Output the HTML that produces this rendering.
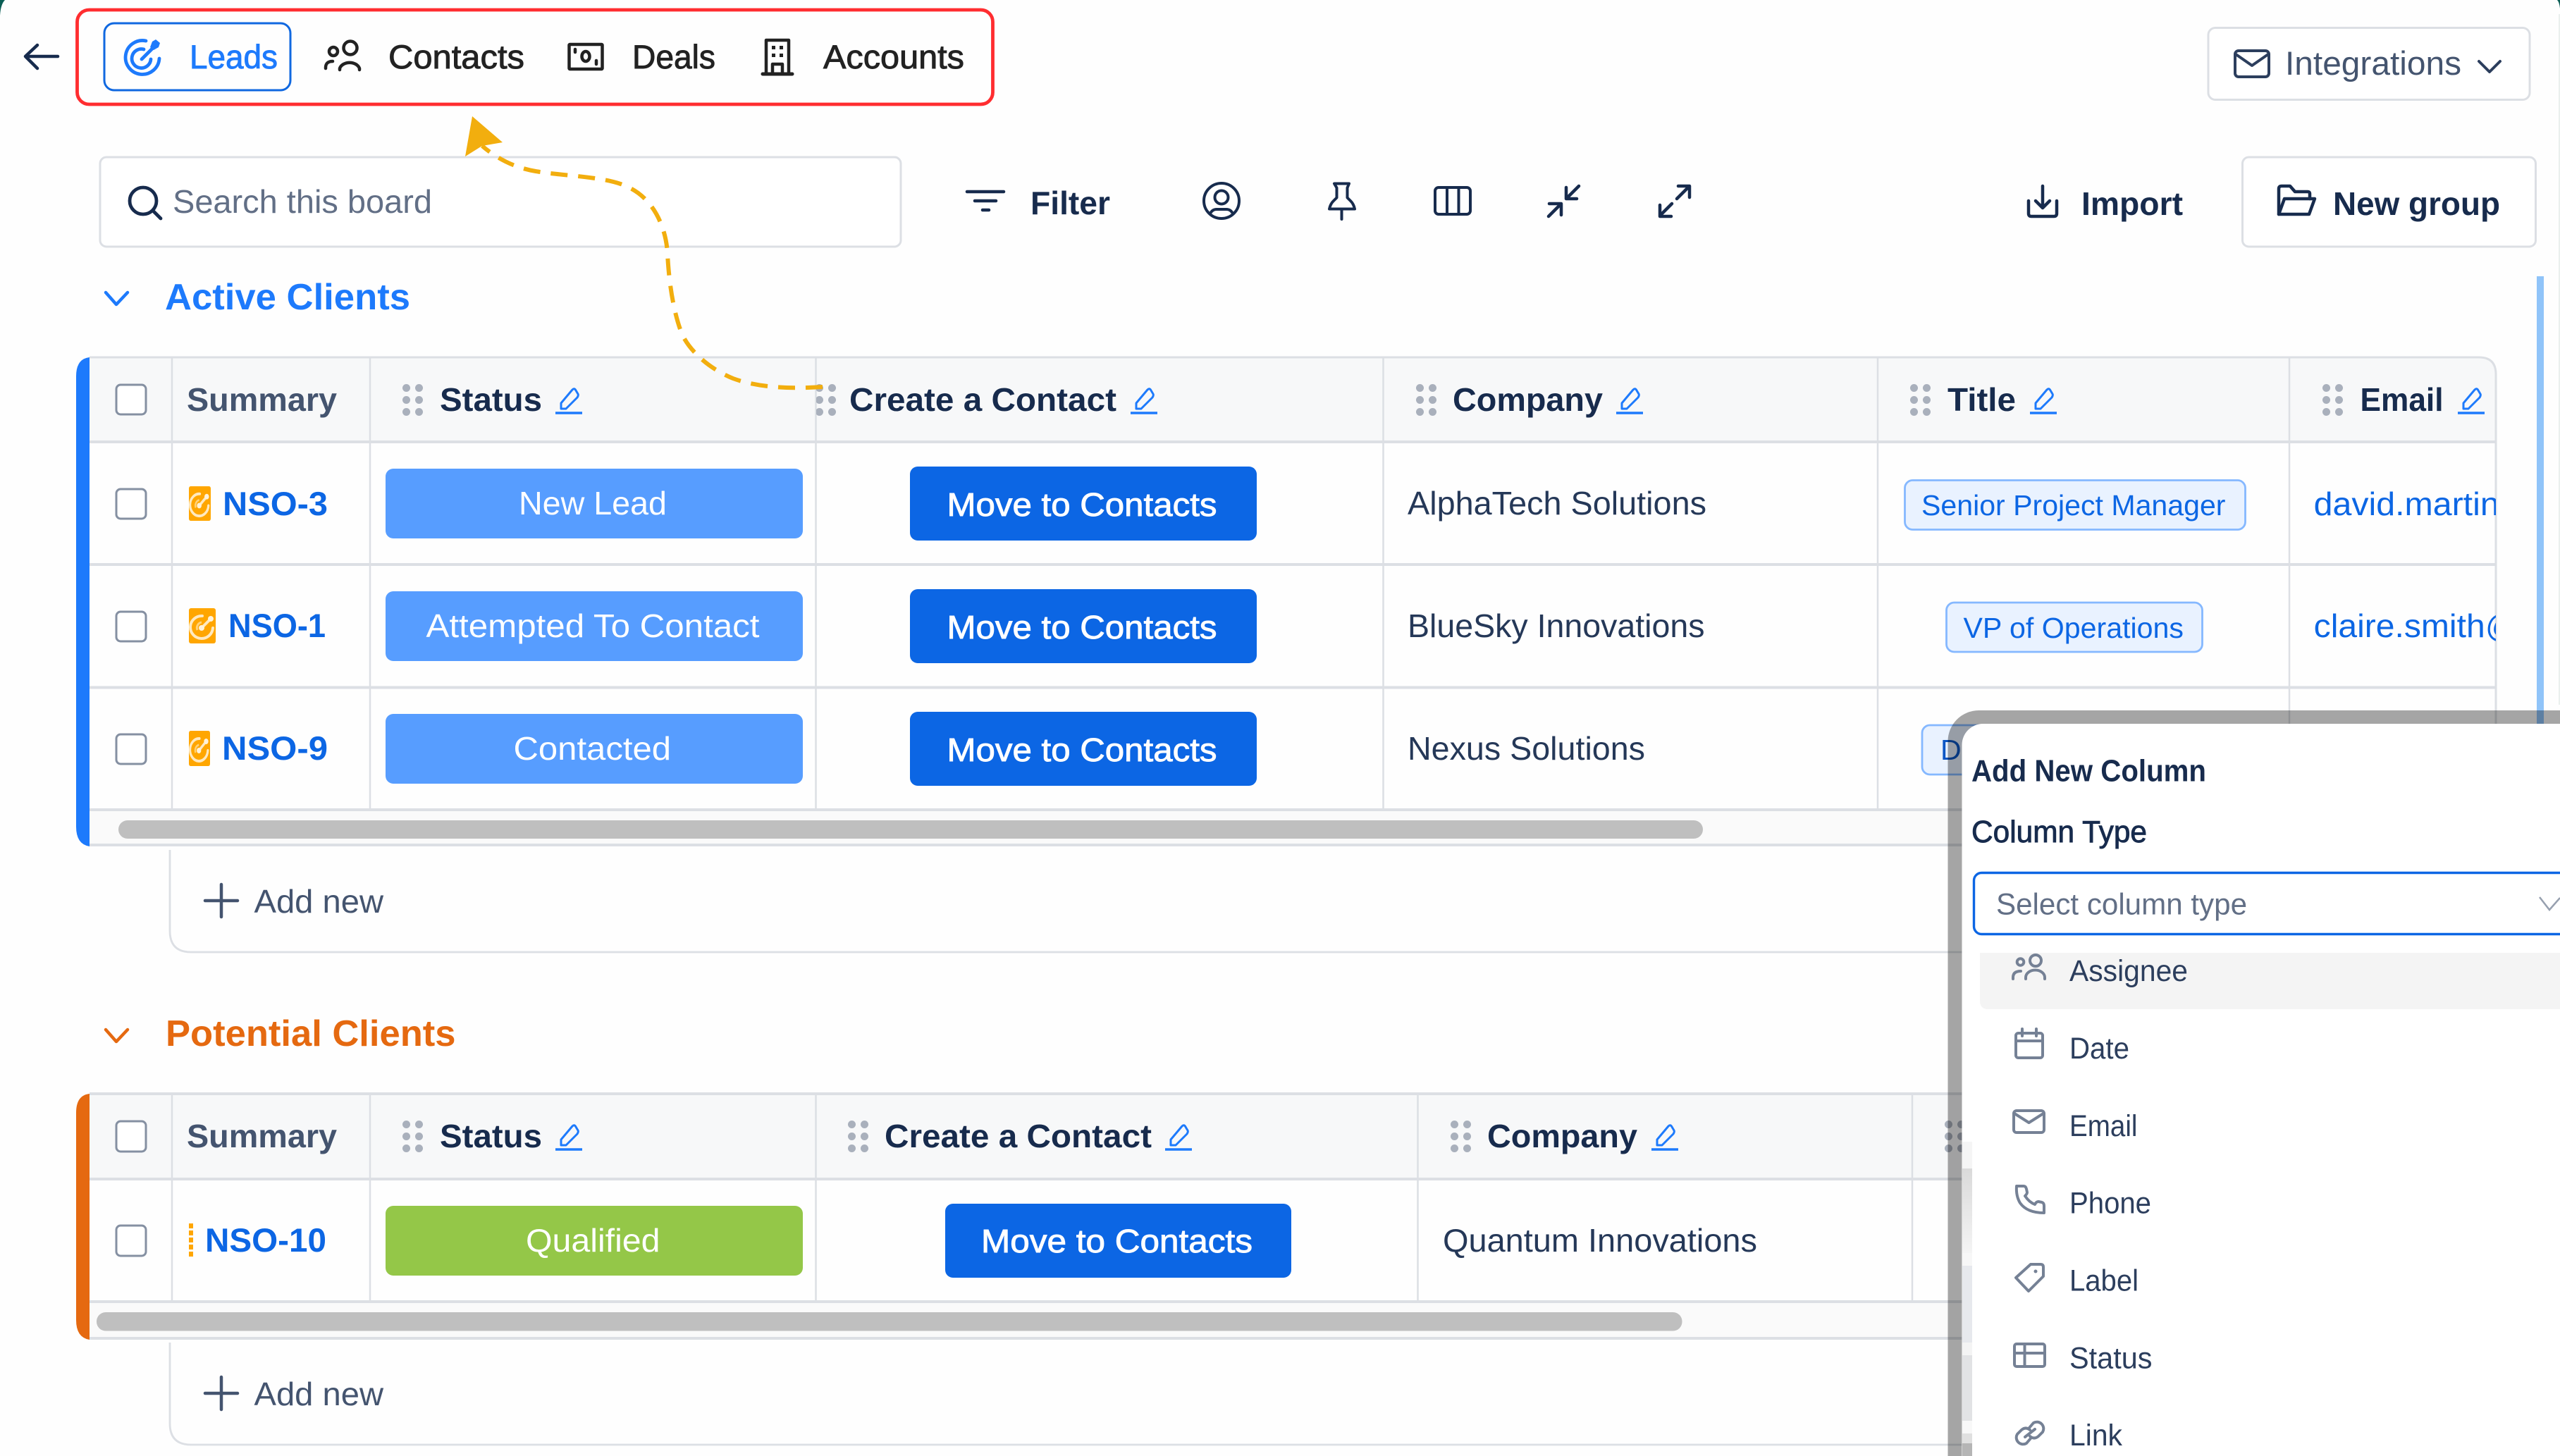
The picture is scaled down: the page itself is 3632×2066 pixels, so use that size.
<!DOCTYPE html>
<html lang="en"><head><meta charset="utf-8"><title>Leads board</title>
<style>
html,body{margin:0;padding:0;background:#fff;width:3632px;height:2066px;overflow:hidden}
svg{display:block}
text{font-family:"Liberation Sans",sans-serif;font-size:46px;fill:#172b4d;white-space:pre;transform:translateX(-2px)}
.m{stroke-width:.9px;paint-order:stroke}
.b{font-weight:bold}
.nav{font-size:47px;fill:#222;stroke:#222}
.hd{font-weight:bold;font-size:46px;fill:#172b4d}
.sm{font-weight:bold;font-size:46px;fill:#44546f}
.st{fill:#fff;font-size:46px}
.btn{fill:#fff;stroke:#fff;font-size:46px}
.cell{fill:#253858;font-size:46px}
.id{fill:#0c66e4;font-weight:bold;font-size:47px}
.tag{fill:#0c66e4;font-size:41px}
.mail{fill:#0c66e4;font-size:46px}
.it{fill:#2c3e5d;font-size:43px}
.ic{fill:none;stroke:#172b4d;stroke-width:4.5;stroke-linecap:round;stroke-linejoin:round}
.dk{fill:none;stroke:#222;stroke-width:4.5;stroke-linecap:round;stroke-linejoin:round}
.gr{fill:none;stroke:#758195;stroke-width:4;stroke-linecap:round;stroke-linejoin:round}
.ln{stroke:#dcdfe4;stroke-width:2.5}
.hl{stroke:#dcdfe4;stroke-width:4}
.cb{fill:#fff;stroke:#8590a2;stroke-width:3}
</style></head><body>
<svg xmlns="http://www.w3.org/2000/svg" width="3632" height="2066" viewBox="0 0 3632 2066">
<defs>
<symbol id="grip" viewBox="0 0 29 45"><g fill="#a9b0bc"><circle cx="5.500" cy="5.500" r="5.500"/><circle cx="23.500" cy="5.500" r="5.500"/><circle cx="5.500" cy="22.500" r="5.500"/><circle cx="23.500" cy="22.500" r="5.500"/><circle cx="5.500" cy="39.500" r="5.500"/><circle cx="23.500" cy="39.500" r="5.500"/></g></symbol>
<symbol id="pen" viewBox="0 0 38 38"><path d="M8 30V22L24 3Q27 0 29 4L32 9Q33 11 31 14L15 30Z" fill="none" stroke="#1d7afc" stroke-width="3" stroke-linejoin="round"/><path d="M0 36H38" stroke="#1d7afc" stroke-width="3.600"/></symbol>
<symbol id="lead" viewBox="0 0 38 50" preserveAspectRatio="none"><rect width="38" height="50" rx="3" fill="#ffa600"/><g fill="none" stroke="#ffe9bf" stroke-width="4" stroke-linecap="round"><path d="M19 11A16 16 0 1 0 34 28"/><path d="M18 28L30 16"/></g><path d="M18 20A8 8 0 0 0 12 31" fill="none" stroke="#ffd27a" stroke-width="3"/><circle cx="18" cy="28" r="4" fill="#fff2d8"/><circle cx="31" cy="15" r="4" fill="#fff2d8"/></symbol>
</defs>
<rect width="3632" height="2066" fill="#fefefe"/>
<path d="M0 0H7Q1 6 0 22Z" fill="#0b5e55"/>
<path d="M3632 0H3628Q3631 3 3632 12Z" fill="#0b5e55"/>

<!-- top nav -->
<path d="M82 80H38" class="ic" stroke-width="5"/><path d="M53 64L36 80L53 97" class="ic"/>
<rect x="109.500" y="14" width="1299" height="134" rx="17" fill="none" stroke="#ff2d30" stroke-width="4.800"/>
<rect x="148" y="33" width="264" height="95" rx="14" fill="none" stroke="#1068e0" stroke-width="3"/>
<g fill="none" stroke="#1d7afc" stroke-width="4.800" stroke-linecap="round" stroke-linejoin="round">
<path d="M207 58A24 24 0 1 0 226 83"/><path d="M204 70A13.500 13.500 0 1 0 214 84"/><path d="M201 84L217 68"/></g>
<path d="M213 67L216 59L221 56L227 61L225 67L218 71Z" fill="#1d7afc"/>
<text x="271" y="97" textLength="125" lengthAdjust="spacingAndGlyphs" class="m" style="font-size:47px;fill:#1d7afc;stroke:#1d7afc">Leads</text>
<g class="dk"><circle cx="497" cy="68" r="9.500"/><path d="M482 99V97A14.500 11 0 0 1 510 97V99"/><circle cx="473" cy="73" r="6"/><path d="M462 97V96Q462 87 472 87"/></g>
<text x="553" y="97" textLength="193" lengthAdjust="spacingAndGlyphs" class="nav m">Contacts</text>
<g class="dk"><rect x="807.500" y="63" width="47" height="35" rx="1"/><ellipse cx="831" cy="80" rx="5.500" ry="7"/><path d="M816 70V74M846 86V91"/></g>
<text x="899" y="97" textLength="118" lengthAdjust="spacingAndGlyphs" class="nav m">Deals</text>
<g class="dk"><path d="M1087 104V57H1119V104"/><path d="M1082 105H1124" stroke-width="5"/><path d="M1096 104V91H1110V104"/></g>
<g fill="#222"><rect x="1095" y="65" width="5" height="5"/><rect x="1106" y="65" width="5" height="5"/><rect x="1095" y="76" width="5" height="5"/><rect x="1106" y="76" width="5" height="5"/></g>
<text x="1170" y="97" textLength="200" lengthAdjust="spacingAndGlyphs" class="nav m">Accounts</text>

<!-- integrations -->
<rect x="3133" y="39.500" width="456" height="102" rx="10" fill="#fff" stroke="#dcdfe4" stroke-width="3"/>
<g class="ic" style="stroke:#2c3e5d;stroke-width:4"><rect x="3171" y="72" width="48" height="37" rx="5"/><path d="M3172 77L3195 93L3218 77"/><path d="M3517 87L3532 102L3547 87"/></g>
<text x="3244" y="106" textLength="250" lengthAdjust="spacingAndGlyphs" style="font-size:47px;fill:#44546f">Integrations</text>

<!-- toolbar -->
<rect x="142" y="223" width="1136" height="127" rx="9" fill="#fff" stroke="#dcdfe4" stroke-width="3"/>
<g class="ic" style="stroke-width:4.800"><circle cx="203" cy="285" r="19"/><path d="M217 299L228 310"/></g>
<text x="247" y="302" textLength="368" lengthAdjust="spacingAndGlyphs" style="font-size:46px;fill:#626f86">Search this board</text>
<g class="ic"><path d="M1372 272H1424M1383 285H1413M1394 298H1403"/></g>
<text x="1464" y="304" textLength="113" lengthAdjust="spacingAndGlyphs" class="b" style="font-size:46px;fill:#172b4d">Filter</text>
<g class="ic" style="stroke-width:4"><circle cx="1733" cy="285" r="25"/><circle cx="1733" cy="280" r="9.500"/><path d="M1717 303Q1720 297 1726 297H1740Q1746 297 1749 303"/></g>
<g class="ic" style="stroke-width:4"><path d="M1893 260.500H1914L1911.500 266.500V280.500L1916.500 285.500Q1920.500 289.500 1922 296.500H1886Q1887.500 289.500 1891.500 285.500L1896.500 280.500V266.500Z"/><path d="M1903.500 297V311"/><rect x="2036" y="266" width="50" height="38" rx="5"/><path d="M2053 266V304M2069.500 266V304"/></g>
<g class="ic" style="stroke-width:4.500"><path d="M2222 266V282H2237M2240 264L2222 282"/><path d="M2198 289H2215V305M2197 307L2215 289"/><path d="M2381 264H2397V280M2379 282L2396 265"/><path d="M2355 291V307H2371M2372 289L2355 306"/></g>
<g class="ic"><path d="M2898 264V295M2888 285L2898 295L2908 285"/><path d="M2878 285V303Q2878 307 2882 307H2914Q2918 307 2918 303V285"/></g>
<text x="2955" y="305" textLength="144" lengthAdjust="spacingAndGlyphs" class="b" style="fill:#172b4d">Import</text>
<rect x="3181.500" y="223" width="416" height="127" rx="9" fill="#fff" stroke="#dcdfe4" stroke-width="3"/>
<g class="ic"><path d="M3233 304V268Q3233 264 3237 264H3249L3256 272H3274Q3277 272 3277 275V282"/><path d="M3233 304L3241 282H3284L3276 304Z"/></g>
<text x="3312" y="305" textLength="237" lengthAdjust="spacingAndGlyphs" class="b" style="fill:#172b4d">New group</text>

<!-- scroll -->
<rect x="3599" y="392" width="10" height="660" fill="#90c4f9"/>
<line x1="3631" y1="20" x2="3631" y2="1000" stroke="#e3ebe9" stroke-width="1.500"/>

<!-- ACTIVE CLIENTS -->
<path d="M150 415L165 432L181 415" fill="none" stroke="#1d7afc" stroke-width="4.500" stroke-linecap="round" stroke-linejoin="round"/>
<text x="236" y="439" textLength="348" lengthAdjust="spacingAndGlyphs" class="b" style="font-size:52px;fill:#1d7afc">Active Clients</text>

<path d="M127 507H3517Q3541 507 3541 531V627H127Z" fill="#f7f8f9"/>
<rect x="127" y="1150" width="3414" height="48" fill="#fafafa"/>
<path d="M127 507Q108 509 108 534V1173Q108 1198 127 1201Z" fill="#1d7afc"/>
<path d="M127 507H3517Q3541 507 3541 531V1149" fill="none" stroke="#dcdfe4" stroke-width="3"/>
<g class="hl"><line x1="127" y1="627" x2="3541" y2="627"/><line x1="127" y1="801" x2="3541" y2="801"/><line x1="127" y1="975.500" x2="3541" y2="975.500"/><line x1="127" y1="1149" x2="3541" y2="1149"/><line x1="127" y1="1199" x2="2800" y2="1199"/></g>
<g class="ln"><line x1="244" y1="507" x2="244" y2="1149"/><line x1="525" y1="507" x2="525" y2="1149"/><line x1="1157.500" y1="507" x2="1157.500" y2="1149"/><line x1="1962.500" y1="507" x2="1962.500" y2="1149"/><line x1="2664" y1="507" x2="2664" y2="1149"/><line x1="3248" y1="507" x2="3248" y2="1149"/></g>
<rect x="168" y="1164" width="2248" height="26" rx="13" fill="#bfbfbf"/>

<rect x="165" y="546" width="42" height="42" rx="6" class="cb"/>
<rect x="165" y="694" width="42" height="42" rx="6" class="cb"/>
<rect x="165" y="868" width="42" height="42" rx="6" class="cb"/>
<rect x="165" y="1042" width="42" height="42" rx="6" class="cb"/>
<text x="267" y="583" textLength="213" lengthAdjust="spacingAndGlyphs" class="sm">Summary</text>
<use href="#grip" x="571" y="545" width="29" height="45"/>
<text x="626" y="583" textLength="145" lengthAdjust="spacingAndGlyphs" class="hd">Status</text>
<use href="#pen" x="788" y="550" width="38" height="38"/>
<svg x="1158" y="540" width="40" height="55"><use href="#grip" x="-1" y="5" width="29" height="45"/></svg>
<text x="1207" y="583" textLength="379" lengthAdjust="spacingAndGlyphs" class="hd">Create a Contact</text>
<use href="#pen" x="1604" y="550" width="38" height="38"/>
<use href="#grip" x="2009" y="545" width="29" height="45"/>
<text x="2063" y="583" textLength="213" lengthAdjust="spacingAndGlyphs" class="hd">Company</text>
<use href="#pen" x="2293" y="550" width="38" height="38"/>
<use href="#grip" x="2710" y="545" width="29" height="45"/>
<text x="2765" y="583" textLength="97" lengthAdjust="spacingAndGlyphs" class="hd">Title</text>
<use href="#pen" x="2880" y="550" width="38" height="38"/>
<use href="#grip" x="3295" y="545" width="29" height="45"/>
<text x="3350.500" y="583" textLength="118" lengthAdjust="spacingAndGlyphs" class="hd">Email</text>
<use href="#pen" x="3487" y="550" width="38" height="38"/>

<use href="#lead" x="268" y="690" width="31" height="49"/>
<text x="318" y="731" textLength="149" lengthAdjust="spacingAndGlyphs" class="id">NSO-3</text>
<use href="#lead" x="268" y="863" width="38" height="50"/>
<text x="326" y="904" textLength="138" lengthAdjust="spacingAndGlyphs" class="id">NSO-1</text>
<use href="#lead" x="268" y="1037" width="30" height="50"/>
<text x="317" y="1078" textLength="150" lengthAdjust="spacingAndGlyphs" class="id">NSO-9</text>

<rect x="547" y="665" width="592" height="99" rx="11" fill="#579dff"/>
<text x="738" y="730" textLength="210" lengthAdjust="spacingAndGlyphs" class="st">New Lead</text>
<rect x="547" y="839" width="592" height="99" rx="11" fill="#579dff"/>
<text x="606.500" y="904" textLength="473" lengthAdjust="spacingAndGlyphs" class="st">Attempted To Contact</text>
<rect x="547" y="1013" width="592" height="99" rx="11" fill="#579dff"/>
<text x="730.500" y="1078" textLength="223.500" lengthAdjust="spacingAndGlyphs" class="st">Contacted</text>

<rect x="1291" y="662" width="492" height="105" rx="11" fill="#0c66e4"/>
<text x="1345.500" y="732" textLength="383" lengthAdjust="spacingAndGlyphs" class="btn m">Move to Contacts</text>
<rect x="1291" y="836" width="492" height="105" rx="11" fill="#0c66e4"/>
<text x="1345.500" y="906" textLength="383" lengthAdjust="spacingAndGlyphs" class="btn m">Move to Contacts</text>
<rect x="1291" y="1010" width="492" height="105" rx="11" fill="#0c66e4"/>
<text x="1345.500" y="1080" textLength="383" lengthAdjust="spacingAndGlyphs" class="btn m">Move to Contacts</text>

<text x="1999" y="730" textLength="424" lengthAdjust="spacingAndGlyphs" class="cell">AlphaTech Solutions</text>
<text x="1999" y="904" textLength="421.500" lengthAdjust="spacingAndGlyphs" class="cell">BlueSky Innovations</text>
<text x="1999" y="1078" textLength="337" lengthAdjust="spacingAndGlyphs" class="cell">Nexus Solutions</text>

<rect x="2702.500" y="681.500" width="483" height="70" rx="11" fill="#e9f2ff" stroke="#85b8ff" stroke-width="2.800"/>
<text x="2728" y="731" textLength="431.500" lengthAdjust="spacingAndGlyphs" class="tag">Senior Project Manager</text>
<rect x="2761.500" y="855" width="363" height="70" rx="11" fill="#e9f2ff" stroke="#85b8ff" stroke-width="2.800"/>
<text x="2787.500" y="905" textLength="312.500" lengthAdjust="spacingAndGlyphs" class="tag">VP of Operations</text>
<rect x="2727" y="1029" width="200" height="70" rx="11" fill="#e9f2ff" stroke="#85b8ff" stroke-width="2.800"/>
<text x="2755" y="1078" class="tag" style="fill:#0c56c4">Director</text>
<svg x="3270" y="680" width="271" height="240">
<text x="14.700" y="51" textLength="263" lengthAdjust="spacingAndGlyphs" class="mail">david.martin</text>
<text x="14.700" y="224" textLength="243" lengthAdjust="spacingAndGlyphs" class="mail">claire.smith</text>
<text x="258" y="224" class="mail">@</text>
</svg>

<!-- Add new 1 -->
<path d="M241 1206V1321Q241 1351 271 1351H2800" fill="none" stroke="#dcdfe4" stroke-width="2.800"/>
<path d="M291 1278H337M314 1255V1301" stroke="#44546f" stroke-width="4.500" stroke-linecap="round"/>
<text x="362.500" y="1295" textLength="183.500" lengthAdjust="spacingAndGlyphs" style="font-size:46px;fill:#44546f">Add new</text>

<!-- POTENTIAL CLIENTS -->
<path d="M150 1461L165 1478L181 1461" fill="none" stroke="#e56910" stroke-width="4.500" stroke-linecap="round" stroke-linejoin="round"/>
<text x="237" y="1484" textLength="411.500" lengthAdjust="spacingAndGlyphs" class="b" style="font-size:52px;fill:#e56910">Potential Clients</text>

<rect x="127" y="1552" width="2700" height="121" fill="#f7f8f9"/>
<rect x="127" y="1848" width="2700" height="49" fill="#fafafa"/>
<path d="M127 1552Q108 1554 108 1579V1873Q108 1898 127 1901Z" fill="#e56910"/>
<g class="hl"><line x1="127" y1="1552" x2="2800" y2="1552"/><line x1="127" y1="1673" x2="2800" y2="1673"/><line x1="127" y1="1847" x2="2800" y2="1847"/><line x1="127" y1="1899" x2="2800" y2="1899"/></g>
<g class="ln"><line x1="244" y1="1552" x2="244" y2="1847"/><line x1="525" y1="1552" x2="525" y2="1847"/><line x1="1157.500" y1="1552" x2="1157.500" y2="1847"/><line x1="2011.500" y1="1552" x2="2011.500" y2="1847"/><line x1="2713" y1="1552" x2="2713" y2="1847"/></g>
<rect x="137" y="1862" width="2249.500" height="26.500" rx="13" fill="#bfbfbf"/>

<rect x="165" y="1591" width="42" height="43" rx="6" class="cb"/>
<rect x="165" y="1739" width="42" height="43" rx="6" class="cb"/>
<text x="267" y="1628" textLength="213" lengthAdjust="spacingAndGlyphs" class="sm">Summary</text>
<use href="#grip" x="571" y="1590" width="29" height="45"/>
<text x="626" y="1628" textLength="145" lengthAdjust="spacingAndGlyphs" class="hd">Status</text>
<use href="#pen" x="788" y="1595" width="38" height="38"/>
<use href="#grip" x="1203" y="1590" width="29" height="45"/>
<text x="1257" y="1628" textLength="379" lengthAdjust="spacingAndGlyphs" class="hd">Create a Contact</text>
<use href="#pen" x="1653" y="1595" width="38" height="38"/>
<use href="#grip" x="2058" y="1590" width="29" height="45"/>
<text x="2112" y="1628" textLength="213" lengthAdjust="spacingAndGlyphs" class="hd">Company</text>
<use href="#pen" x="2343" y="1595" width="38" height="38"/>
<use href="#grip" x="2759" y="1590" width="29" height="45"/>

<line x1="271" y1="1736" x2="271" y2="1785" stroke="#ffa600" stroke-width="6" stroke-dasharray="7 3"/>
<text x="293" y="1776" textLength="172" lengthAdjust="spacingAndGlyphs" class="id">NSO-10</text>
<rect x="547" y="1711" width="592" height="99" rx="11" fill="#94c748"/>
<text x="748" y="1776" textLength="190.500" lengthAdjust="spacingAndGlyphs" class="st">Qualified</text>
<rect x="1341" y="1708" width="491" height="105" rx="11" fill="#0c66e4"/>
<text x="1394" y="1777" textLength="385" lengthAdjust="spacingAndGlyphs" class="btn m">Move to Contacts</text>
<text x="2049" y="1776" textLength="446" lengthAdjust="spacingAndGlyphs" class="cell">Quantum Innovations</text>

<!-- Add new 2 -->
<path d="M241 1905V2020Q241 2050 271 2050H2800" fill="none" stroke="#dcdfe4" stroke-width="2.800"/>
<path d="M291 1977H337M314 1954V2000" stroke="#44546f" stroke-width="4.500" stroke-linecap="round"/>
<text x="362.500" y="1994" textLength="183.500" lengthAdjust="spacingAndGlyphs" style="font-size:46px;fill:#44546f">Add new</text>

<!-- yellow arrow -->
<path d="M1167 549C1120 552 1075 550 1040 537C1005 523 975 495 966 470C955 440 949 400 947 360C945 320 925 280 890 265C860 250 800 250 760 243C730 238 705 225 684 207" fill="none" stroke="#f2ae0e" stroke-width="6" stroke-dasharray="24 15"/>
<path d="M670 165L713 202L684 207L660 222Z" fill="#f2ae0e"/>

<!-- modal -->
<path d="M2763.500 2066V1052A44 44 0 0 1 2807.500 1008H3632V2066Z" fill="#000" fill-opacity=".35"/>
<path d="M2783.500 2066V1057A30 30 0 0 1 2813.500 1027H3632V2066Z" fill="#fff"/>
<rect x="2784" y="1620" width="14" height="38" fill="#f5f5f5"/>
<defs><linearGradient id="g1" x1="0" y1="0" x2="0" y2="1"><stop offset="0" stop-color="#dadada"/><stop offset="1" stop-color="#f4f4f4"/></linearGradient></defs>
<rect x="2784" y="1658" width="14" height="120" fill="url(#g1)"/>
<rect x="2784" y="1778" width="14" height="18" fill="#f7f7f7"/>
<rect x="2784" y="1796" width="14" height="109" fill="#e7e9ed"/>
<rect x="2784" y="1905" width="14" height="18" fill="#f4f4f4"/>
<rect x="2784" y="1923" width="14" height="93" fill="#e2e3e5"/>
<rect x="2784" y="2016" width="14" height="18" fill="#f8f8f8"/>
<rect x="2784" y="2034" width="14" height="14" fill="#e0e0e0"/>
<rect x="2784" y="2048" width="14" height="18" fill="#b5b5b5"/>

<text x="2799" y="1108.500" textLength="333" lengthAdjust="spacingAndGlyphs" class="b" style="font-size:44px;fill:#172b4d">Add New Column</text>
<text x="2799" y="1195" textLength="249" lengthAdjust="spacingAndGlyphs" class="m" style="font-size:44px;fill:#172b4d;stroke:#172b4d">Column Type</text>
<path d="M3632 1238.500H2811.500A11 11 0 0 0 2800.500 1249.500V1314.500A11 11 0 0 0 2811.500 1325.500H3632" fill="#fff" stroke="#0c66e4" stroke-width="3.400"/>
<text x="2834" y="1297.500" textLength="356" lengthAdjust="spacingAndGlyphs" style="font-size:43px;fill:#626f86">Select column type</text>
<path d="M3603 1273L3617 1291L3632 1274" fill="none" stroke="#97a0af" stroke-width="2.500"/>
<path d="M2809 1352H3632V1432H2821Q2809 1432 2809 1420Z" fill="#f4f4f4"/>

<g class="gr">
<circle cx="2888" cy="1363" r="8"/><path d="M2874 1389V1387A13.500 10.500 0 0 1 2901 1387V1389"/><circle cx="2866.500" cy="1365" r="4.800"/><path d="M2856 1389V1387Q2856 1378 2867 1378"/>
<rect x="2860" y="1466" width="38" height="35" rx="3.500"/><path d="M2860 1477H2898M2869 1460V1470M2889 1460V1470"/>
<rect x="2857" y="1576" width="43" height="31" rx="4"/><path d="M2858 1580L2878.500 1593L2899 1580"/>
<path d="M2861 1683H2871Q2874 1683 2875 1687L2876 1692Q2876 1694 2873 1697Q2879 1706 2887 1709Q2889 1705 2892 1705L2897 1706Q2900 1707 2900 1711V1721Q2876 1721 2866 1707Q2860 1697 2861 1683Z"/>
<path d="M2881 1794H2895Q2899 1794 2899 1798V1811L2878 1832L2860 1813Z"/><rect x="2858" y="1907" width="43" height="32" rx="3"/><path d="M2858 1920H2901M2872.500 1907V1939"/>
<path d="M2879 2026L2885 2019A9.500 9.500 0 0 1 2898 2032L2892 2038Q2886 2043 2880 2038"/><path d="M2881 2041L2875 2048A9.500 9.500 0 0 1 2862 2035L2868 2029Q2874 2024 2880 2029"/><path d="M2873 2039L2887 2028"/>
</g>
<circle cx="2888" cy="1804" r="2.500" fill="#758195"/>

<text x="2938" y="1392" textLength="168" lengthAdjust="spacingAndGlyphs" class="it">Assignee</text>
<text x="2938" y="1502" textLength="85" lengthAdjust="spacingAndGlyphs" class="it">Date</text>
<text x="2938" y="1612" textLength="96.500" lengthAdjust="spacingAndGlyphs" class="it">Email</text>
<text x="2938" y="1721.500" textLength="116" lengthAdjust="spacingAndGlyphs" class="it">Phone</text>
<text x="2938" y="1831.500" textLength="98" lengthAdjust="spacingAndGlyphs" class="it">Label</text>
<text x="2938" y="1941.500" textLength="117.500" lengthAdjust="spacingAndGlyphs" class="it">Status</text>
<text x="2938" y="2051" textLength="75" lengthAdjust="spacingAndGlyphs" class="it">Link</text>
</svg>
</body></html>
